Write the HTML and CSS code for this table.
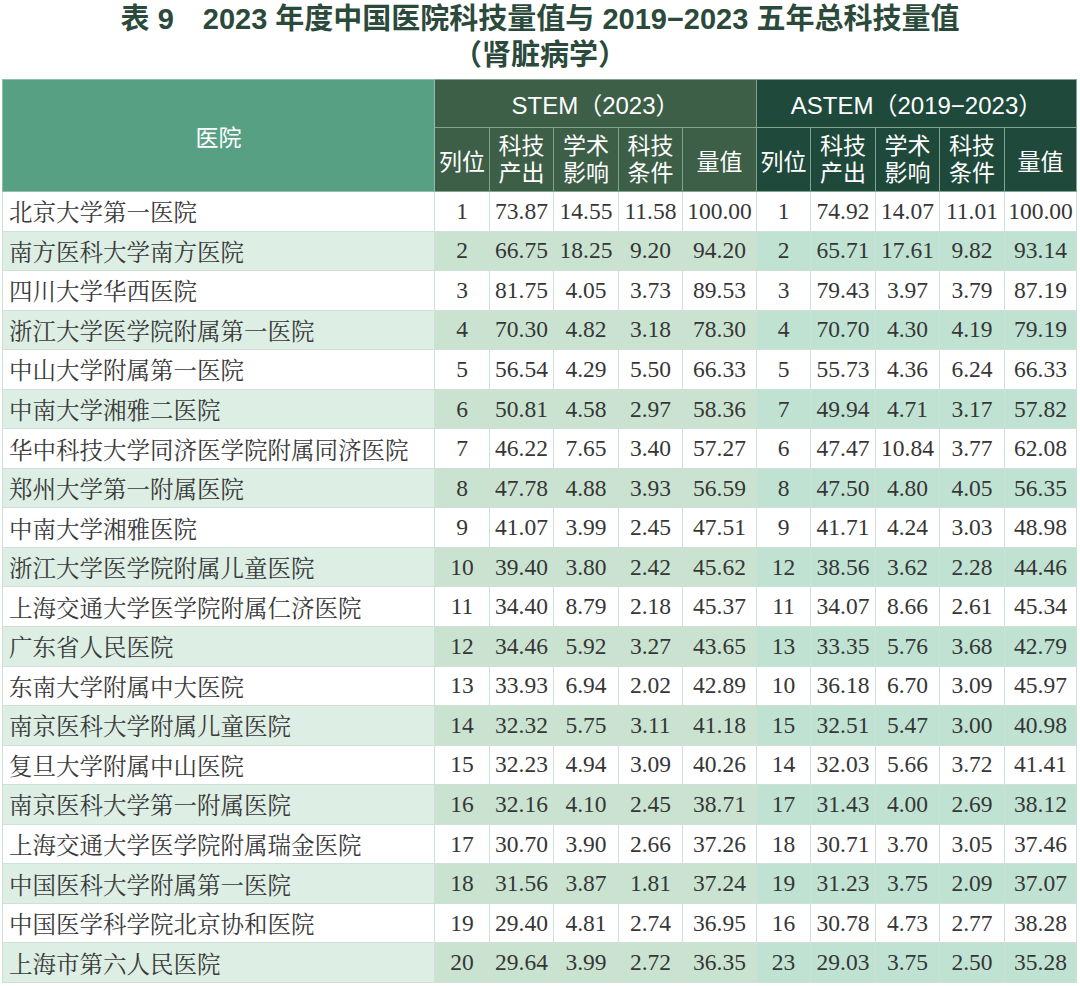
FILE: index.html
```html
<!DOCTYPE html>
<html lang="zh-CN">
<head>
<meta charset="utf-8">
<title>表 9 肾脏病学</title>
<link rel="stylesheet" href="styles.css">
</head>
<body>
<div class="page">
  <h1 class="title">
    <span class="line">表 9　2023 年度中国医院科技量值与 2019−2023 五年总科技量值</span>
    <span class="line">（肾脏病学）</span>
  </h1>
  <table class="tbl">
    <colgroup>
      <col class="c-name"><col class="c-rank"><col class="c-64"><col class="c-65"><col class="c-64"><col class="c-74">
      <col class="c-rank2"><col class="c-65"><col class="c-64"><col class="c-65"><col class="c-72">
    </colgroup>
    <thead>
      <tr class="h1">
        <th rowspan="2" class="hh">医院</th>
        <th colspan="5" class="hs">STEM（2023）</th>
        <th colspan="5" class="ha">ASTEM（2019−2023）</th>
      </tr>
      <tr class="h2">
        <th class="hs">列位</th><th class="hs two">科技<br>产出</th><th class="hs two">学术<br>影响</th><th class="hs two">科技<br>条件</th><th class="hs">量值</th>
        <th class="ha">列位</th><th class="ha two">科技<br>产出</th><th class="ha two">学术<br>影响</th><th class="ha two">科技<br>条件</th><th class="ha">量值</th>
      </tr>
    </thead>
    <tbody>
      <tr><td class="name">北京大学第一医院</td><td class="s">1</td><td class="s">73.87</td><td class="s">14.55</td><td class="s">11.58</td><td class="s">100.00</td><td class="a">1</td><td class="a">74.92</td><td class="a">14.07</td><td class="a">11.01</td><td class="a">100.00</td></tr>
      <tr class="alt"><td class="name">南方医科大学南方医院</td><td class="s">2</td><td class="s">66.75</td><td class="s">18.25</td><td class="s">9.20</td><td class="s">94.20</td><td class="a">2</td><td class="a">65.71</td><td class="a">17.61</td><td class="a">9.82</td><td class="a">93.14</td></tr>
      <tr><td class="name">四川大学华西医院</td><td class="s">3</td><td class="s">81.75</td><td class="s">4.05</td><td class="s">3.73</td><td class="s">89.53</td><td class="a">3</td><td class="a">79.43</td><td class="a">3.97</td><td class="a">3.79</td><td class="a">87.19</td></tr>
      <tr class="alt"><td class="name">浙江大学医学院附属第一医院</td><td class="s">4</td><td class="s">70.30</td><td class="s">4.82</td><td class="s">3.18</td><td class="s">78.30</td><td class="a">4</td><td class="a">70.70</td><td class="a">4.30</td><td class="a">4.19</td><td class="a">79.19</td></tr>
      <tr><td class="name">中山大学附属第一医院</td><td class="s">5</td><td class="s">56.54</td><td class="s">4.29</td><td class="s">5.50</td><td class="s">66.33</td><td class="a">5</td><td class="a">55.73</td><td class="a">4.36</td><td class="a">6.24</td><td class="a">66.33</td></tr>
      <tr class="alt"><td class="name">中南大学湘雅二医院</td><td class="s">6</td><td class="s">50.81</td><td class="s">4.58</td><td class="s">2.97</td><td class="s">58.36</td><td class="a">7</td><td class="a">49.94</td><td class="a">4.71</td><td class="a">3.17</td><td class="a">57.82</td></tr>
      <tr><td class="name">华中科技大学同济医学院附属同济医院</td><td class="s">7</td><td class="s">46.22</td><td class="s">7.65</td><td class="s">3.40</td><td class="s">57.27</td><td class="a">6</td><td class="a">47.47</td><td class="a">10.84</td><td class="a">3.77</td><td class="a">62.08</td></tr>
      <tr class="alt"><td class="name">郑州大学第一附属医院</td><td class="s">8</td><td class="s">47.78</td><td class="s">4.88</td><td class="s">3.93</td><td class="s">56.59</td><td class="a">8</td><td class="a">47.50</td><td class="a">4.80</td><td class="a">4.05</td><td class="a">56.35</td></tr>
      <tr><td class="name">中南大学湘雅医院</td><td class="s">9</td><td class="s">41.07</td><td class="s">3.99</td><td class="s">2.45</td><td class="s">47.51</td><td class="a">9</td><td class="a">41.71</td><td class="a">4.24</td><td class="a">3.03</td><td class="a">48.98</td></tr>
      <tr class="alt"><td class="name">浙江大学医学院附属儿童医院</td><td class="s">10</td><td class="s">39.40</td><td class="s">3.80</td><td class="s">2.42</td><td class="s">45.62</td><td class="a">12</td><td class="a">38.56</td><td class="a">3.62</td><td class="a">2.28</td><td class="a">44.46</td></tr>
      <tr><td class="name">上海交通大学医学院附属仁济医院</td><td class="s">11</td><td class="s">34.40</td><td class="s">8.79</td><td class="s">2.18</td><td class="s">45.37</td><td class="a">11</td><td class="a">34.07</td><td class="a">8.66</td><td class="a">2.61</td><td class="a">45.34</td></tr>
      <tr class="alt"><td class="name">广东省人民医院</td><td class="s">12</td><td class="s">34.46</td><td class="s">5.92</td><td class="s">3.27</td><td class="s">43.65</td><td class="a">13</td><td class="a">33.35</td><td class="a">5.76</td><td class="a">3.68</td><td class="a">42.79</td></tr>
      <tr><td class="name">东南大学附属中大医院</td><td class="s">13</td><td class="s">33.93</td><td class="s">6.94</td><td class="s">2.02</td><td class="s">42.89</td><td class="a">10</td><td class="a">36.18</td><td class="a">6.70</td><td class="a">3.09</td><td class="a">45.97</td></tr>
      <tr class="alt"><td class="name">南京医科大学附属儿童医院</td><td class="s">14</td><td class="s">32.32</td><td class="s">5.75</td><td class="s">3.11</td><td class="s">41.18</td><td class="a">15</td><td class="a">32.51</td><td class="a">5.47</td><td class="a">3.00</td><td class="a">40.98</td></tr>
      <tr><td class="name">复旦大学附属中山医院</td><td class="s">15</td><td class="s">32.23</td><td class="s">4.94</td><td class="s">3.09</td><td class="s">40.26</td><td class="a">14</td><td class="a">32.03</td><td class="a">5.66</td><td class="a">3.72</td><td class="a">41.41</td></tr>
      <tr class="alt"><td class="name">南京医科大学第一附属医院</td><td class="s">16</td><td class="s">32.16</td><td class="s">4.10</td><td class="s">2.45</td><td class="s">38.71</td><td class="a">17</td><td class="a">31.43</td><td class="a">4.00</td><td class="a">2.69</td><td class="a">38.12</td></tr>
      <tr><td class="name">上海交通大学医学院附属瑞金医院</td><td class="s">17</td><td class="s">30.70</td><td class="s">3.90</td><td class="s">2.66</td><td class="s">37.26</td><td class="a">18</td><td class="a">30.71</td><td class="a">3.70</td><td class="a">3.05</td><td class="a">37.46</td></tr>
      <tr class="alt"><td class="name">中国医科大学附属第一医院</td><td class="s">18</td><td class="s">31.56</td><td class="s">3.87</td><td class="s">1.81</td><td class="s">37.24</td><td class="a">19</td><td class="a">31.23</td><td class="a">3.75</td><td class="a">2.09</td><td class="a">37.07</td></tr>
      <tr><td class="name">中国医学科学院北京协和医院</td><td class="s">19</td><td class="s">29.40</td><td class="s">4.81</td><td class="s">2.74</td><td class="s">36.95</td><td class="a">16</td><td class="a">30.78</td><td class="a">4.73</td><td class="a">2.77</td><td class="a">38.28</td></tr>
      <tr class="alt"><td class="name">上海市第六人民医院</td><td class="s">20</td><td class="s">29.64</td><td class="s">3.99</td><td class="s">2.72</td><td class="s">36.35</td><td class="a">23</td><td class="a">29.03</td><td class="a">3.75</td><td class="a">2.50</td><td class="a">35.28</td></tr>
    </tbody>
  </table>
</div>
</body>
</html>
```
FILE: styles.css
```css
html, body {
  margin: 0;
  padding: 0;
  background: #ffffff;
}
.page {
  width: 1080px;
  padding: 1px 0 0 2px;
  box-sizing: border-box;
}
.title {
  margin: 0 0 6px 0;
  padding: 0;
  text-align: center;
  font-family: "Liberation Sans", "Noto Sans CJK SC", sans-serif;
  font-weight: 700;
  font-size: 29px;
  line-height: 36px;
  color: #2b4a3b;
  width: 1076px;
}
.title .line {
  display: block;
}
.tbl {
  border-collapse: collapse;
  table-layout: fixed;
  width: 1074px;
  border: 1px solid #c3dacb;
}
.c-name { width: 432px; }
.c-rank { width: 55px; }
.c-rank2 { width: 54px; }
.c-64 { width: 64px; }
.c-65 { width: 65px; }
.c-74 { width: 74px; }
.c-72 { width: 72px; }

th {
  font-family: "Liberation Sans", "Noto Sans CJK SC", sans-serif;
  font-weight: 400;
  font-size: 23px;
  color: #ffffff;
  padding: 0;
  text-align: center;
  vertical-align: middle;
  border: 1px solid #7fa58f;
}
.h1 { height: 48px; }
.h2 { height: 64px; }
.h1 th { font-size: 24px; }
th.two { line-height: 27px; }
th.hh { background: #58a084; border-color: #8cc0a8; font-size: 23px; }
th.hs { background: #3d5e47; }
th.ha { background: #1f4a3b; }

tbody tr { height: 39.55px; }
td {
  font-family: "Liberation Serif", "Noto Serif CJK SC", "Noto Sans CJK SC", serif;
  font-size: 23.5px;
  color: #363636;
  padding: 0;
  text-align: center;
  border: 1px solid #cfe1d6;
  white-space: nowrap;
  background: #ffffff;
}
td.name {
  text-align: left;
  padding-left: 6px;
  font-size: 23.5px;
  color: #3a3a3a;
}
tr.alt td.name { background: #ddeee4; }
tr.alt td.s { background: #cae3d1; }
tr.alt td.a { background: #c0e2d2; }
```
